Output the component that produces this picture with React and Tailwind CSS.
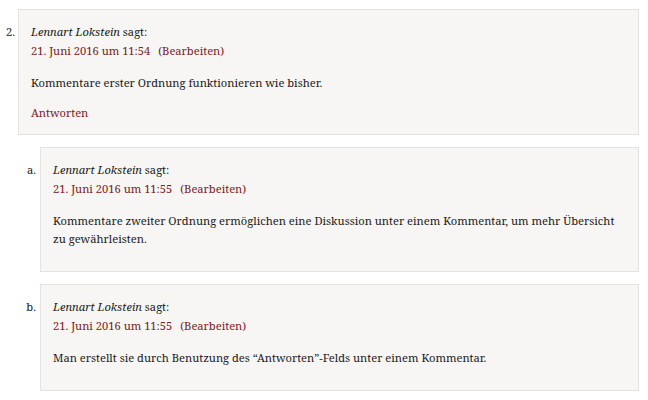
const comments = [
  {
    marker: "2.",
    date: "21. Juni 2016 um 11:54",
    text: "Kommentare erster Ordnung funktionieren wie bisher.",
    reply: true,
    children: [
      {
        marker: "a.",
        date: "21. Juni 2016 um 11:55",
        text: "Kommentare zweiter Ordnung ermöglichen eine Diskussion unter einem Kommentar, um mehr Übersicht zu gewährleisten.",
      },
      {
        marker: "b.",
        date: "21. Juni 2016 um 11:55",
        text: "Man erstellt sie durch Benutzung des “Antworten”-Felds unter einem Kommentar.",
      },
    ],
  },
];

function CommentBox({ c }) {
  return (
    <div
      className={`flex-1 border border-[#e4e3e1] bg-[#f7f6f4] pl-3 pr-3 pt-3 ${
        c.reply ? "pb-3" : "pb-[23px]"
      }`}
    >
      <div className="leading-[19px]">
        <span className="italic">Lennart Lokstein</span> sagt:
      </div>
      <div className="leading-[19px] text-[#7b2121]">
        {c.date}
        <span className="ml-2">(Bearbeiten)</span>
      </div>
      <p className="mt-[14px] leading-[18px]">{c.text}</p>
      {c.reply && (
        <div className="mt-[11px] leading-[19px] text-[#7b2121]">Antworten</div>
      )}
    </div>
  );
}

export default function App() {
  return (
    <div className="w-[648px] h-[400px] overflow-hidden bg-white pt-[9px] pr-[9px] font-['Noto_Serif','Liberation_Serif',serif] text-[11.15px] text-[#1a1a1a]">
      {comments.map((c) => (
        <div key={c.marker}>
          <div className="flex">
            <div className="w-[18px] shrink-0 pr-[3px] pt-[13px] text-right leading-[19px]">
              {c.marker}
            </div>
            <CommentBox c={c} />
          </div>
          <div className="ml-[18px] flex flex-col gap-3 pt-3">
            {c.children.map((k) => (
              <div key={k.marker} className="flex">
                <div className="w-[22px] shrink-0 pr-[4px] pt-[13px] text-right leading-[19px]">
                  {k.marker}
                </div>
                <CommentBox c={k} />
              </div>
            ))}
          </div>
        </div>
      ))}
    </div>
  );
}
